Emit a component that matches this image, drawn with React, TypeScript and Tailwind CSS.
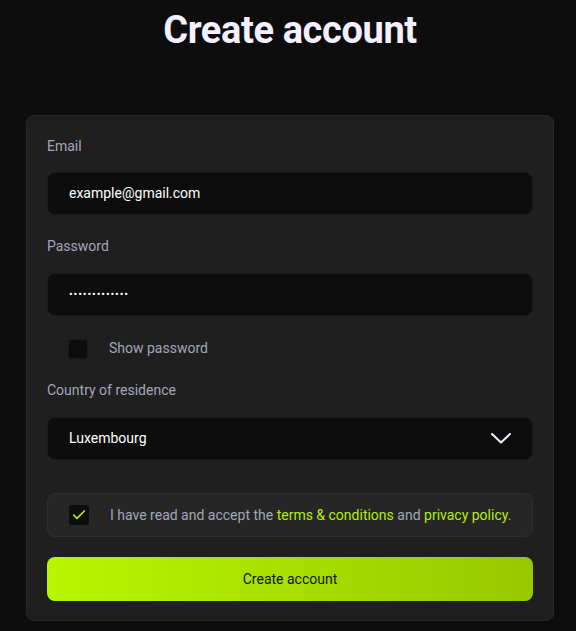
import { Check } from 'lucide-react';

const labelCls = 'block text-[14px] leading-5 text-[#a3a6ba]';
const fieldCls =
  'flex h-[43px] items-center rounded-lg border border-[#1a1a1a] bg-[#0d0d0d] px-[21px] text-[14px] text-white';

export default function App() {
  return (
    <div className="min-h-[631px] bg-[#0d0d0d] font-['Roboto',sans-serif]">
      <h1 className="pl-1 pt-[10px] text-center text-[38px] font-bold leading-10 tracking-[-0.01em] text-[#f3f1ff]">
        Create account
      </h1>

      <form className="ml-[26px] mt-[65px] w-[528px] rounded-lg border border-[#292929] bg-[#1f1f1f] px-[20px] pb-[19px] pt-[20px]">
        <label className={labelCls}>Email</label>
        <div className={`${fieldCls} mt-[16px]`}>example@gmail.com</div>

        <label className={`${labelCls} mt-[21px]`}>Password</label>
        <div className={`${fieldCls} mt-[17px]`}>
          <span className="text-[11px] leading-none tracking-[0.9px]">•••••••••••••</span>
        </div>

        <div className="mt-[22px] flex items-center pl-[21px]">
          <span className="h-5 w-5 rounded-[3px] border border-[#1a1a1a] bg-[#0d0d0d]" />
          <span className="ml-[21px] text-[14px] text-[#a3a6ba]">Show password</span>
        </div>

        <label className={`${labelCls} mt-[21px]`}>Country of residence</label>
        <div className={`${fieldCls} mt-[17px] justify-between`}>
          <span>Luxembourg</span>
          <svg width="20" height="11" viewBox="0 0 20 11" fill="none">
            <path d="M1 1l9 8.5L19 1" stroke="#f3f1ff" strokeWidth="2" strokeLinecap="round" strokeLinejoin="round" />
          </svg>
        </div>

        <div className="mt-[33px] flex h-[44px] items-center rounded-lg border border-[#2e2e2e] bg-[#262626] pl-[21px]">
          <span className="flex h-5 w-5 items-center justify-center rounded-[3px] bg-[#0d0d0d]">
            <Check className="h-4 w-4 text-[#b4f000]" strokeWidth={2.5} />
          </span>
          <span className="ml-[21px] text-[14px] text-[#a3a6ba]">
            I have read and accept the <span className="text-[#b4f000]">terms &amp; conditions</span> and{' '}
            <span className="text-[#b4f000]">privacy policy</span>.
          </span>
        </div>

        <button
          type="button"
          className="mt-[20px] flex h-[44px] w-full items-center justify-center rounded-lg bg-gradient-to-r from-[#b7f700] to-[#97c800] text-[14px] text-[#141414]"
        >
          Create account
        </button>
      </form>
    </div>
  );
}
